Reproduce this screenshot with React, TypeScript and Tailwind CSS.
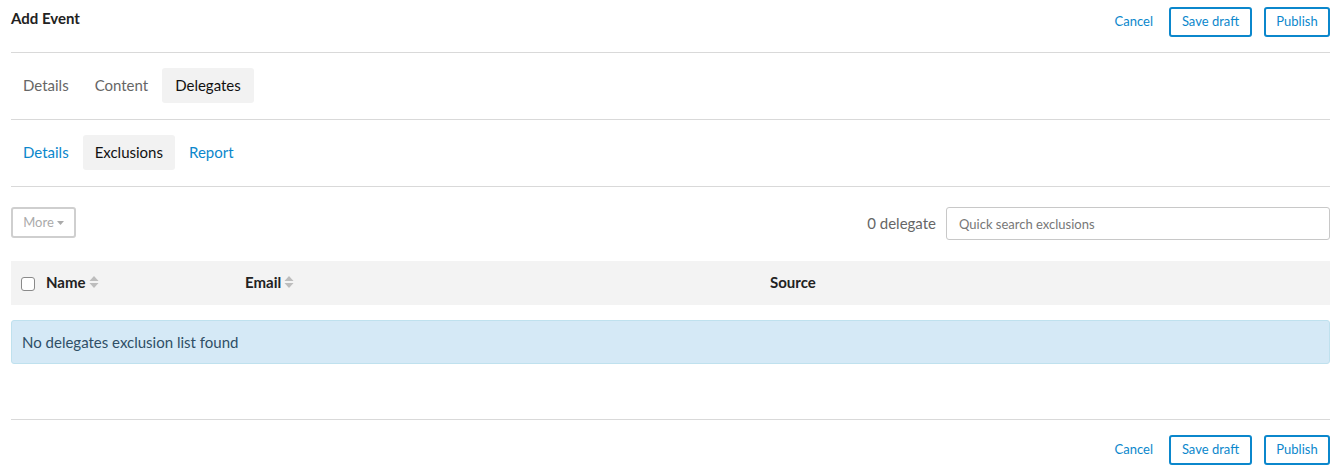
import React from "react";

const font = { fontFamily: "Lato, 'Open Sans', 'Noto Sans', sans-serif" };

function SortIcon() {
  return (
    <svg width="10" height="14" viewBox="0 0 10 14" className="ml-[3px] inline-block">
      <path d="M5 1 L9.5 6 L0.5 6 Z" fill="#bdbdbd" />
      <path d="M0.5 8 L9.5 8 L5 13 Z" fill="#bdbdbd" />
    </svg>
  );
}

function ActionBar() {
  return (
    <div className="flex items-center">
      <a className="text-[13px] text-[#0b87cc] mr-[16px] cursor-pointer">Cancel</a>
      <button className="h-[30px] w-[83px] rounded-[3px] border-2 border-[#0b87cc] text-[13px] text-[#0b87cc] bg-white">
        Save draft
      </button>
      <button className="ml-[12px] h-[30px] w-[66px] rounded-[3px] border-2 border-[#0b87cc] text-[13px] text-[#0b87cc] bg-white">
        Publish
      </button>
    </div>
  );
}

export default function App() {
  return (
    <div style={font} className="bg-white w-[1339px] h-[476px] pl-[11px] pr-[9px] text-[#333]">
      <div className="flex justify-between items-start h-[53px] border-b border-[#d9d9d9]">
        <h1 className="mt-[8px] text-[15px] leading-[20px] font-bold text-[#222]">Add Event</h1>
        <div className="mt-[7px]">
          <ActionBar />
        </div>
      </div>

      <div className="flex gap-[2px] pt-[15px] pb-[16px] border-b border-[#d9d9d9]">
        <div className="h-[35px] px-[12px] flex items-center text-[15px] text-[#666]">Details</div>
        <div className="h-[35px] px-[12px] flex items-center text-[15px] text-[#666]">Content</div>
        <div className="h-[35px] px-[13px] flex items-center text-[15px] text-[#111] bg-[#f2f2f2] rounded-[3px]">
          Delegates
        </div>
      </div>

      <div className="flex gap-[2px] pt-[15px] pb-[16px] border-b border-[#d9d9d9]">
        <div className="h-[35px] px-[12px] flex items-center text-[15px] text-[#0b87cc]">Details</div>
        <div className="h-[35px] px-[12px] flex items-center text-[15px] text-[#111] bg-[#f2f2f2] rounded-[3px]">
          Exclusions
        </div>
        <div className="h-[35px] px-[12px] flex items-center text-[15px] text-[#0b87cc]">Report</div>
      </div>

      <div className="flex justify-between items-start pt-[20px]">
        <button className="h-[31px] w-[65px] rounded-[3px] border-2 border-[#cfcfcf] text-[13px] text-[#aaa] flex items-center justify-center gap-[3px] bg-white">
          More
          <svg width="7" height="4" viewBox="0 0 7 4">
            <path d="M0 0 L7 0 L3.5 4 Z" fill="#aaa" />
          </svg>
        </button>
        <div className="flex items-center gap-[10px]">
          <span className="text-[15px] text-[#666]">0 delegate</span>
          <input
            className="h-[33px] w-[384px] rounded-[3px] border border-[#c8c8c8] px-[12px] text-[13px] outline-none placeholder:text-[#777]"
            placeholder="Quick search exclusions"
          />
        </div>
      </div>

      <div className="mt-[21px] grid grid-cols-[35px_199px_525px_1fr] items-center h-[44px] bg-[#f3f3f3]">
        <div className="pl-[10px] flex items-center pt-[2px]">
          <span className="block w-[14px] h-[14px] rounded-[3px] border border-[#8a8a8a] bg-white" />
        </div>
        <div className="flex items-center text-[15px] font-bold text-[#222] -mt-[2px]">
          Name
          <SortIcon />
        </div>
        <div className="flex items-center text-[15px] font-bold text-[#222] -mt-[2px]">
          Email
          <SortIcon />
        </div>
        <div className="text-[15px] font-bold text-[#222] -mt-[2px]">Source</div>
      </div>

      <div className="mt-[15px] h-[44px] flex items-center pl-[10px] rounded-[3px] border border-[#bfe1ee] bg-[#d5e9f6] text-[15px] text-[#2f4f66]">
        No delegates exclusion list found
      </div>

      <div className="mt-[55px] border-t border-[#d9d9d9] pt-[15px] flex justify-end">
        <ActionBar />
      </div>
    </div>
  );
}
